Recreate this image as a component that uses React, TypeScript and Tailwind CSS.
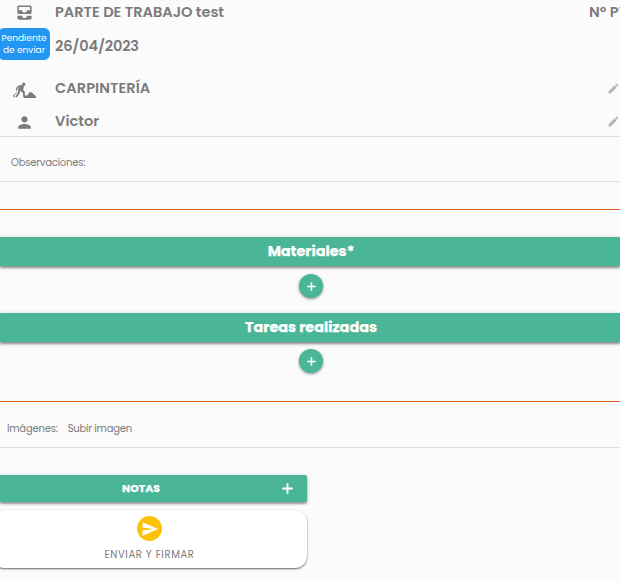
import type { ReactNode } from "react";
import { MdAllInbox, MdEdit, MdPerson, MdSend } from "react-icons/md";

function PlusIcon({ size }: { size: number }) {
  return (
    <svg width={size} height={size} viewBox="0 0 10 10" stroke="currentColor" strokeWidth={1.7}>
      <path d="M5 0.3v9.4M0.3 5h9.4" />
    </svg>
  );
}

// Walking worker with a shovel next to a pile of dirt
function WorkerIcon() {
  return (
    <svg width="24" height="17" viewBox="0 0 24 17" fill="currentColor">
      <circle cx="10.7" cy="2.2" r="1.7" />
      <path d="M5.6 3.6l3.8-.7 1.6 1.6-.9 3.2 1.6 2.1.5 5.8h-1.8l-.6-4.9-2.3-2.3-1.2 3.5-2.5 3.7-1.4-1 2.2-3.4 1.5-6.1-1.4 1.2-.6 2.4H2.8l.7-3.2z" />
      <path d="M4.1 6.4l6.9 4.2M1 13.2l3-3" stroke="currentColor" strokeWidth="0.9" />
      <path d="M.3 12.5l2 1.6-1.6 1.6z" />
      <path d="M10.5 16l2.2-2.4 1.8-.4 1.6-2.6 1.9-.7 1.5 1 1 1.4 1.5.9 1.5 2.8z" />
    </svg>
  );
}

function SectionHeader({ children }: { children: ReactNode }) {
  return (
    <h2 className="h-[29px] shrink-0 bg-[#4ab697] pl-[2px] text-center text-[14.4px] leading-[28px] font-bold text-white shadow-[0_2px_2px_rgba(0,0,0,0.35),0_1px_5px_rgba(0,0,0,0.2)] [-webkit-text-stroke:0.25px_white]">
      {children}
    </h2>
  );
}

function AddButton() {
  return (
    <button className="flex size-6 items-center justify-center rounded-full bg-[#4ab697] text-white shadow-[0_1px_3px_rgba(0,0,0,0.45)]">
      <PlusIcon size={9} />
    </button>
  );
}

export default function App() {
  return (
    <div className="flex h-[580px] w-[620px] flex-col overflow-hidden bg-[#fbfbfb] font-['Poppins','Inter',sans-serif] text-[#7b7b7b]">
      {/* Work report header */}
      <header className="h-[137px] shrink-0 border-b border-[#dddddd] text-[14.6px] font-semibold">
        <div className="flex h-6 items-center">
          <div className="flex w-[55px] justify-center pr-[7px]">
            <MdAllInbox size={19} />
          </div>
          <span className="pt-[2px] tracking-[-0.03px]">PARTE DE TRABAJO test</span>
          <span className="-mr-5 ml-auto w-[51px] pt-[2px] whitespace-nowrap">Nº PT</span>
        </div>
        <div className="flex h-11 items-center">
          <div className="-mt-1 mr-[5px] -ml-[2px] flex h-8 w-[52px] items-center justify-center rounded-md bg-[#2196f3] text-center text-[9px] leading-3 font-normal text-white">
            Pendiente
            <br />
            de enviar
          </div>
          <span className="pt-[2px] tracking-[-0.2px]">26/04/2023</span>
        </div>
        <div className="flex h-10 items-center">
          <div className="flex w-[55px] justify-center pt-1 pr-[6px]">
            <WorkerIcon />
          </div>
          <span className="pt-[2px] tracking-[0.05px]">CARPINTERÍA</span>
          <MdEdit size={13} className="ml-auto text-[#b5b5b5]" />
        </div>
        <div className="flex h-[26px] items-center">
          <div className="flex w-[55px] justify-center pt-[3px] pr-[7px]">
            <MdPerson size={19} />
          </div>
          <span className="pt-[2px]">Victor</span>
          <MdEdit size={13} className="ml-auto text-[#b5b5b5]" />
        </div>
      </header>

      <div className="flex h-[45px] shrink-0 items-center border-b border-[#dddddd] pt-[6px] pl-[11px] text-[10px] tracking-[-0.2px]">
        Observaciones:
      </div>
      <div className="mb-[27px] h-7 shrink-0 border-b border-[#d9601f]" />

      <SectionHeader>Materiales*</SectionHeader>
      <div className="flex h-[47px] shrink-0 justify-center pt-2 pl-[2px]">
        <AddButton />
      </div>
      <SectionHeader>Tareas realizadas</SectionHeader>
      <div className="flex h-[60px] shrink-0 justify-center border-b border-[#d9601f] pt-[7px] pl-[2px]">
        <AddButton />
      </div>

      <div className="mb-[27px] flex h-[46px] shrink-0 items-center gap-[10px] border-b border-[#dddddd] pt-2 pl-[7px] text-[10px] tracking-[-0.2px]">
        <span>Imágenes:</span>
        <span>Subir imagen</span>
      </div>

      {/* Footer actions */}
      <div className="w-[307px]">
        <button className="flex h-[27px] w-full items-center rounded-r-[2px] bg-[#4ab697] text-white shadow-[0_2px_2px_rgba(0,0,0,0.3),0_1px_4px_rgba(0,0,0,0.2)]">
          <span className="ml-[122px] pt-[2px] text-[10.8px] font-bold tracking-[0.1px] [-webkit-text-stroke:0.25px_white]">NOTAS</span>
          <span className="mr-[14px] ml-auto">
            <PlusIcon size={11} />
          </span>
        </button>
        <button className="mt-2 -ml-2 flex h-[58px] w-[315px] flex-col items-center rounded-xl bg-white pt-[6px] shadow-[0_1px_2px_rgba(0,0,0,0.6)]">
          <span className="flex size-[25px] items-center justify-center rounded-full bg-[#ffc107] text-white">
            <MdSend size={18} />
          </span>
          <span className="mt-[7px] text-[10px] leading-[14px] tracking-[0.65px]">ENVIAR Y FIRMAR</span>
        </button>
      </div>
    </div>
  );
}
